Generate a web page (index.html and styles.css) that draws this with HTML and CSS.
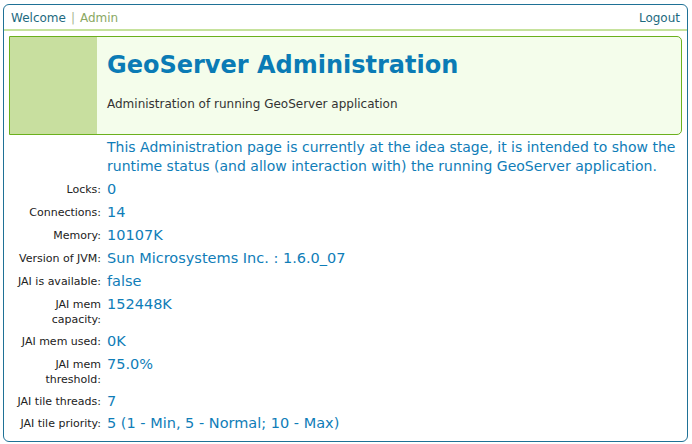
FILE: index.html
```html
<!DOCTYPE html>
<html>
<head>
<meta charset="utf-8">
<title>GeoServer Administration</title>
<link rel="stylesheet" href="styles.css">
</head>
<body>
<div class="page">
  <div class="topbar">
    <div class="crumbs"><a class="link">Welcome</a><span class="sep">|</span><span class="current">Admin</span></div>
    <a class="link">Logout</a>
  </div>
  <div class="header">
    <div class="side"></div>
    <div class="head-text">
      <h1 class="title">GeoServer Administration</h1>
      <p class="subtitle">Administration of running GeoServer application</p>
    </div>
  </div>
  <p class="intro">This Administration page is currently at the idea stage, it is intended to show the runtime status (and allow interaction with) the running GeoServer application.</p>
  <div class="rows">
    <div class="row"><div class="label">Locks:</div><div class="value">0</div></div>
    <div class="row"><div class="label">Connections:</div><div class="value">14</div></div>
    <div class="row"><div class="label">Memory:</div><div class="value">10107K</div></div>
    <div class="row"><div class="label">Version of JVM:</div><div class="value">Sun Microsystems Inc. : 1.6.0_07</div></div>
    <div class="row"><div class="label">JAI is available:</div><div class="value">false</div></div>
    <div class="row"><div class="label">JAI mem capacity:</div><div class="value">152448K</div></div>
    <div class="row"><div class="label">JAI mem used:</div><div class="value">0K</div></div>
    <div class="row"><div class="label">JAI mem threshold:</div><div class="value">75.0%</div></div>
    <div class="row"><div class="label">JAI tile threads:</div><div class="value">7</div></div>
    <div class="row"><div class="label">JAI tile priority:</div><div class="value">5 (1 - Min, 5 - Normal; 10 - Max)</div></div>
  </div>
</div>
</body>
</html>
```
FILE: styles.css
```css
html, body {
  margin: 0;
  padding: 0;
  background: #ffffff;
}
body {
  font-family: "DejaVu Sans", Verdana, sans-serif;
  color: #222222;
}
.page {
  margin: 4px 4px 0 3px;
  height: 438px;
  box-sizing: border-box;
  border: 1px solid #1f7196;
  border-radius: 6px;
}
.topbar {
  display: flex;
  justify-content: space-between;
  align-items: flex-end;
  height: 26px;
  padding: 0 7px 3px 7px;
  border-bottom: 2px solid #c6e29c;
  font-size: 12px;
  line-height: 15px;
  box-sizing: border-box;
}
.link {
  color: #1d6a80;
  text-decoration: none;
}
.sep {
  color: #a8b890;
  margin: 0 5px;
}
.current {
  color: #8aa863;
}
.header {
  display: flex;
  margin: 5px 5px 0 5px;
  height: 99px;
  box-sizing: border-box;
  border: 1px solid #6bb01d;
  border-radius: 0 5px 5px 0;
  background: #f4fdeb;
  overflow: hidden;
}
.side {
  width: 87px;
  background: #c8df9f;
  flex: none;
}
.head-text {
  padding: 13px 0 0 10px;
}
.title {
  margin: 0;
  font-size: 24px;
  line-height: 30px;
  font-weight: bold;
  color: #0a7bb5;
}
.subtitle {
  margin: 17px 0 0 0;
  font-size: 12px;
  line-height: 15px;
  color: #333333;
}
.intro {
  margin: 3px 8px 0 103px;
  font-size: 14px;
  line-height: 19px;
  color: #0f7db8;
}
.rows {
  display: flex;
  flex-direction: column;
  margin-top: 2px;
}
.row {
  display: flex;
  gap: 6px;
  padding: 3px 0;
}
.row:last-child {
  padding-top: 2px;
}
.label {
  width: 97px;
  flex: none;
  text-align: right;
  font-size: 11px;
  line-height: 15px;
  color: #222222;
  padding-top: 1px;
}
.value {
  font-size: 14.5px;
  line-height: 17px;
  color: #0f7db8;
}
```
